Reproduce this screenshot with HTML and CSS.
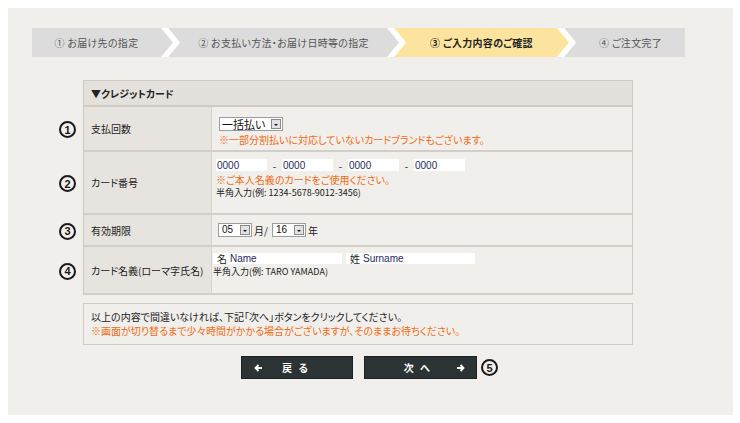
FILE: index.html
```html
<!DOCTYPE html>
<html lang="ja">
<head>
    <meta charset="UTF-8">
    <title>ご入力内容のご確認</title>
    <link rel="stylesheet" href="styles.css">
</head>
<body>

    <div class="panel">
        <ol class="steps">
            <li class="step first"><span>① お届け先の指定</span></li>
            <li class="step second"><span>② お支払い方法・お届け日時等の指定</span></li>
            <li class="step current"><span>③ ご入力内容のご確認</span></li>
            <li class="step last"><span>④ ご注文完了</span></li>
        </ol>

        <div class="card-form">
            <div class="head">▼クレジットカード</div>

            <div class="num"><i>1</i></div>
            <div class="label">支払回数</div>
            <div class="value row-pay">
                <div class="sel wide"><span>一括払い</span><b></b></div>
                <p class="note">※一部分割払いに対応していないカードブランドもございます。</p>
            </div>

            <div class="num"><i>2</i></div>
            <div class="label">カード番号</div>
            <div class="value row-card">
                <div class="card-inputs">
                    <input type="text" value="0000"><em>-</em>
                    <input type="text" value="0000"><em>-</em>
                    <input type="text" value="0000"><em>-</em>
                    <input type="text" value="0000">
                </div>
                <p class="note">※ご本人名義のカードをご使用ください。</p>
                <p class="hint">半角入力(例: 1234-5678-9012-3456)</p>
            </div>

            <div class="num"><i>3</i></div>
            <div class="label">有効期限</div>
            <div class="value row-date">
                <div class="sel"><span>05</span><b></b></div>
                <span class="unit">月/</span>
                <div class="sel"><span>16</span><b></b></div>
                <span class="unit">年</span>
            </div>

            <div class="num"><i>4</i></div>
            <div class="label">カード名義(ローマ字氏名)</div>
            <div class="value row-name">
                <div class="name-inputs">
                    <label class="name-box">名 <input type="text" value="Name"></label>
                    <label class="name-box">姓 <input type="text" value="Surname"></label>
                </div>
                <p class="hint">半角入力(例: TARO YAMADA)</p>
            </div>
        </div>

        <div class="notice">
            <p>以上の内容で間違いなければ、下記「次へ」ボタンをクリックしてください。</p>
            <p class="note">※画面が切り替るまで少々時間がかかる場合がございますが、そのままお待ちください。</p>
        </div>

        <div class="buttons">
            <button class="btn back">
                <svg width="9" height="8" viewBox="0 0 9 8"><path d="M8 4H2M4.5 1L1.5 4l3 3" stroke="#fff" stroke-width="1.8" fill="none"/></svg>
                <span>戻 る</span>
            </button>
            <button class="btn next">
                <span>次 へ</span>
                <svg width="9" height="8" viewBox="0 0 9 8"><path d="M1 4h6M4.5 1l3 3-3 3" stroke="#fff" stroke-width="1.8" fill="none"/></svg>
            </button>
            <div class="num five"><i>5</i></div>
        </div>
    </div>

</body>
</html>
```

FILE: styles.css
```css
body {
    margin: 0;
    background-color: #fff;
    font-family: "Noto Sans CJK JP", "Noto Sans", sans-serif;
    font-feature-settings: "palt";
    font-size: 10px;
    color: #222;
}

p {
    margin: 0;
}

.panel {
    margin: 8px;
    width: 725px;
    height: 407px;
    box-sizing: border-box;
    padding-top: 20px;
    background-color: #f0efeb;
}

/* step bar */
.steps {
    display: flex;
    list-style: none;
    margin: 0 0 0 24px;
    padding: 0;
    height: 29px;
}

.step {
    height: 29px;
    margin-left: -12px;
    background-color: #fff;
    clip-path: polygon(0 0, calc(100% - 12px) 0, 100% 50%, calc(100% - 12px) 100%, 0 100%, 12px 50%);
}

.step span {
    display: flex;
    height: 100%;
    align-items: center;
    justify-content: center;
    padding: 0 19px 0 12px;
    background-color: #dcdcdc;
    color: #555;
    letter-spacing: 0.3px;
    white-space: nowrap;
    clip-path: polygon(0 0, calc(100% - 19px) 0, calc(100% - 7px) 50%, calc(100% - 19px) 100%, 0 100%, 12px 50%);
}

.step.first {
    width: 148px;
    margin-left: 0;
    clip-path: polygon(0 0, calc(100% - 12px) 0, 100% 50%, calc(100% - 12px) 100%, 0 100%);
}

.step.first span {
    padding-left: 0;
    clip-path: polygon(0 0, calc(100% - 19px) 0, calc(100% - 7px) 50%, calc(100% - 19px) 100%, 0 100%);
}

.step.second {
    width: 238px;
}

.step.current {
    width: 182px;
}

.step.current span {
    background-color: #fde49e;
    color: #222;
    font-weight: bold;
}

.step.last {
    width: 121px;
    clip-path: polygon(0 0, 100% 0, 100% 100%, 0 100%, 12px 50%);
}

.step.last span {
    padding-right: 0;
    clip-path: polygon(0 0, 100% 0, 100% 100%, 0 100%, 12px 50%);
}

/* form table */
.card-form {
    display: grid;
    grid-template-columns: 26px 129px 421px;
    grid-template-rows: 27px 45px 63px 32px 48px;
    margin: 23px 0 0 49px;
}

.card-form > div {
    box-sizing: border-box;
}

.head {
    grid-column: 2 / 4;
    display: flex;
    align-items: center;
    padding-left: 7px;
    background-color: #e4e1dd;
    border: 1px solid #cfcac4;
    border-bottom-width: 2px;
    font-weight: bold;
}

.num {
    display: flex;
    align-items: center;
    padding-left: 2px;
}

.num i {
    display: flex;
    align-items: center;
    justify-content: center;
    width: 17px;
    height: 17px;
    box-sizing: border-box;
    border: 2px solid #1a1a1a;
    border-radius: 50%;
    font-style: normal;
    font-family: "Liberation Sans", Arial, sans-serif;
    font-weight: bold;
    font-size: 11px;
    color: #1a1a1a;
}

.label {
    display: flex;
    align-items: center;
    padding-left: 7px;
    background-color: #e7e4e0;
    border-left: 1px solid #cfcac4;
    border-right: 1px solid #d8d4ce;
    border-bottom: 2px solid #d3cec8;
    white-space: nowrap;
}

.value {
    border-right: 1px solid #cfcac4;
    border-bottom: 2px solid #d3cec8;
}

.note {
    color: #f26b14;
}

.hint {
    font-size: 9px;
    color: #222;
}

.row-pay {
    padding: 8px 0 0 7px;
}

.row-pay .note {
    margin-top: 2px;
    line-height: 14px;
}

.sel {
    display: inline-flex;
    height: 14px;
    box-sizing: border-box;
    border: 1px solid #9c9c9c;
    background-color: #fff;
    vertical-align: middle;
}

.sel span {
    padding: 0 3px;
    line-height: 12px;
    white-space: nowrap;
    font-family: "Liberation Sans", "Noto Sans CJK JP", sans-serif;
    font-size: 10px;
    color: #111;
}

.sel.wide span {
    padding: 0 4px 0 2px;
    font-family: "Noto Sans CJK JP", sans-serif;
    font-size: 11px;
}

.sel b {
    width: 10px;
    margin: 1px 1px 1px 2px;
    background-color: #e2e2e2;
    border: 1px solid #8a8a8a;
    box-sizing: border-box;
    position: relative;
}

.sel b::after {
    content: "";
    position: absolute;
    left: 2px;
    top: 4px;
    border-left: 2px solid transparent;
    border-right: 2px solid transparent;
    border-top: 2px solid #111;
}

.row-card {
    padding: 7px 0 0 4px;
}

.card-inputs {
    display: flex;
    align-items: center;
    height: 12px;
}

.card-inputs input,
.name-box input {
    width: 49px;
    height: 12px;
    padding: 0 1px;
    border: none;
    background-color: #fff;
    font-family: "Liberation Sans", Arial, sans-serif;
    font-size: 10px;
    color: #1f2b5e;
    outline: none;
}

.card-inputs em {
    width: 15px;
    text-align: center;
    font-style: normal;
}

.row-card .note {
    margin-top: 2px;
    line-height: 14px;
}

.row-card .hint {
    line-height: 12px;
}

.row-date {
    display: flex;
    align-items: center;
    padding-left: 6px;
}

.unit {
    margin: 0 4px 0 2px;
}

.row-date .sel span {
    width: 13px;
}

.row-name {
    padding: 6px 0 0 1px;
}

.name-inputs {
    display: flex;
    gap: 4px;
}

.name-box {
    display: flex;
    align-items: center;
    width: 129px;
    height: 11px;
    padding-left: 4px;
    background-color: #fff;
    box-sizing: border-box;
    line-height: 11px;
}

.name-box input {
    flex: 1;
    height: 11px;
    padding-left: 3px;
}

.row-name .hint {
    margin-top: 2px;
    line-height: 12px;
}

/* notice */
.notice {
    width: 550px;
    height: 42px;
    box-sizing: border-box;
    margin: 8px 0 0 75px;
    padding: 6px 0 0 7px;
    border: 1px solid #cfcac4;
    line-height: 14px;
}

/* buttons */
.buttons {
    display: flex;
    align-items: center;
    margin: 11px 0 0 233px;
}

.btn {
    display: flex;
    align-items: center;
    width: 112px;
    height: 23px;
    margin-right: 11px;
    padding: 0;
    background-color: #2c3335;
    border: 1px solid #1c2122;
    color: #fff;
    font-family: "Noto Sans CJK JP", sans-serif;
    font-weight: bold;
    font-size: 10px;
    letter-spacing: 2px;
    cursor: pointer;
}

.btn.back svg {
    margin: 0 19px 0 12px;
}

.btn.next {
    width: 113px;
    margin-right: 4px;
    justify-content: flex-end;
}

.btn.next svg {
    margin: 0 11px 0 24px;
}

.num.five {
    padding-left: 0;
}
```
